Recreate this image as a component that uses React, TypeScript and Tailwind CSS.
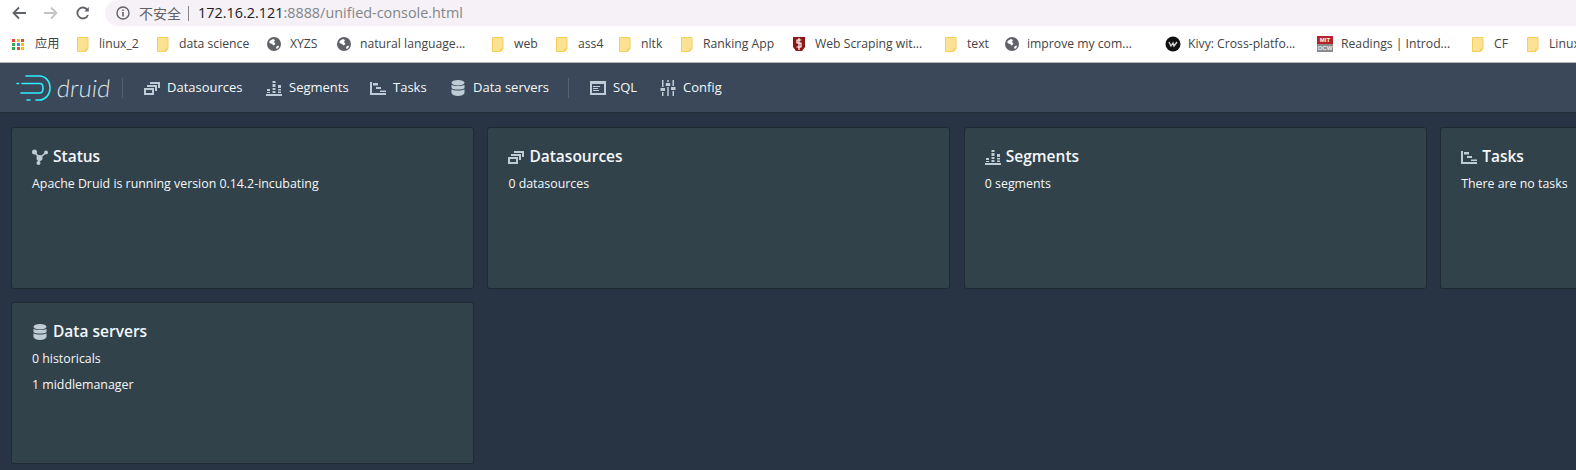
import React from "react";

const ui = "font-['Open_Sans',sans-serif]";

function Folder() {
    return (
        <svg width="12" height="15" viewBox="0 0 12 15" className="shrink-0">
            <path d="M.5.5h10.5v11.5l-2.5 2.5H.5z" fill="#fde293" stroke="#f4cf5a" />
            <path d="M8.5 14.5v-2.5H11" fill="none" stroke="#f4cf5a" />
        </svg>
    );
}

function Globe() {
    return (
        <svg width="14" height="14" viewBox="0 0 14 14" className="shrink-0">
            <circle cx="7" cy="7" r="7" fill="#5f6368" />
            <path d="M2.5 4 6 2l2 1-1 2 1.500 2-2 1.500L5 7 2.500 6zM9.500 9.500l2-1 .5 1.500-2 2-1-1z" fill="#fff" />
        </svg>
    );
}

function AppsGrid() {
    const colors = ["#ea4335", "#fbbc04", "#ea4335", "#34a853", "#4285f4", "#fbbc04", "#34a853", "#ea4335", "#fbbc04"];
    return (
        <div className="grid grid-cols-3 gap-[1px] w-[13px] shrink-0">
            {colors.map((c, i) => (
                <div key={i} className="h-[3px] w-[3px]" style={{ backgroundColor: c }} />
            ))}
        </div>
    );
}

function Stanford() {
    return (
        <svg width="12" height="16" viewBox="0 0 12 16" className="shrink-0">
            <path d="M0 1h12v10l-3 4H3l-3-4z" fill="#8c1515" />
            <path d="M8.500 4H4v3h4v4H3.500M6 2v12" fill="none" stroke="#fff" strokeWidth="1.200" />
        </svg>
    );
}

function Kivy() {
    return (
        <svg width="16" height="16" viewBox="0 0 16 16" className="shrink-0">
            <circle cx="8" cy="8" r="7.500" fill="#111" />
            <path d="M4 6l2 4 2-3 1 3 3-4" fill="none" stroke="#ddd" strokeWidth="1.300" />
        </svg>
    );
}

function Ocw() {
    return (
        <div className="flex h-[16px] w-[16px] shrink-0 flex-col font-['Liberation_Sans',sans-serif] text-[6px] leading-[8px] font-bold">
            <div className="h-[8px] bg-[#b3232e] text-center text-white">MIT</div>
            <div className="h-[8px] bg-[#8c8c8c] text-center text-[#eee]">OCW</div>
        </div>
    );
}

const bookmarks = [
    { label: "应用", icon: <AppsGrid />, w: "w-[65px]", gap: "gap-[10px]" },
    { label: "linux_2", icon: <Folder />, w: "w-[80px]", gap: "gap-[10px]" },
    { label: "data science", icon: <Folder />, w: "w-[110px]", gap: "gap-[10px]" },
    { label: "XYZS", icon: <Globe />, w: "w-[70px]", gap: "gap-[9px]" },
    { label: "natural language...", icon: <Globe />, w: "w-[155px]", gap: "gap-[9px]" },
    { label: "web", icon: <Folder />, w: "w-[64px]", gap: "gap-[10px]" },
    { label: "ass4", icon: <Folder />, w: "w-[63px]", gap: "gap-[10px]" },
    { label: "nltk", icon: <Folder />, w: "w-[62px]", gap: "gap-[10px]" },
    { label: "Ranking App", icon: <Folder />, w: "w-[112px]", gap: "gap-[10px]" },
    { label: "Web Scraping wit...", icon: <Stanford />, w: "w-[152px]", gap: "gap-[10px]" },
    { label: "text", icon: <Folder />, w: "w-[60px]", gap: "gap-[10px]" },
    { label: "improve my com...", icon: <Globe />, w: "w-[160px]", gap: "gap-[8px]" },
    { label: "Kivy: Cross-platfo...", icon: <Kivy />, w: "w-[152px]", gap: "gap-[7px]" },
    { label: "Readings | Introd...", icon: <Ocw />, w: "w-[155px]", gap: "gap-[8px]" },
    { label: "CF", icon: <Folder />, w: "w-[55px]", gap: "gap-[10px]" },
    { label: "Linux", icon: <Folder />, w: "w-[60px]", gap: "gap-[10px]" },
];

/* console icons, 16 unit grid */
function MultiSelect({ className = "" }: { className?: string }) {
    return (
        <svg viewBox="0 0 16 16" className={className} fill="currentColor">
            <path fillRule="evenodd" d="M0 8h10v7H0zm2 2v3h6v-3z" />
            <path d="M3 5h10v6h-2V7H3z" />
            <path d="M6 2h10v6h-2V4H6z" />
        </svg>
    );
}

function StackedChart({ className = "" }: { className?: string }) {
    return (
        <svg viewBox="0 0 16 16" className={className} fill="currentColor">
            <path d="M0 14h16v2H0zM1 9h3v2H1zM1 12h3v1H1zM6.500 1h3v2h-3zM6.500 4h3v3h-3zM6.500 8h3v2h-3zM6.500 11h3v2h-3zM12 5h3v3h-3zM12 9h3v1.500h-3zM12 11.500h3V13h-3z" />
        </svg>
    );
}

function GanttChart({ className = "" }: { className?: string }) {
    return (
        <svg viewBox="0 0 16 16" className={className} fill="currentColor">
            <path d="M0 2h2v11h14v2H0zM3 3h5v2.500H3zM6 7h5v2H6zM10 10.500h6v1.500h-6z" />
        </svg>
    );
}

function Database({ className = "" }: { className?: string }) {
    return (
        <svg viewBox="0 0 16 16" className={className} fill="currentColor">
            <ellipse cx="8" cy="2.800" rx="6.500" ry="2.800" />
            <path d="M1.500 4.800C3 6.500 13 6.500 14.500 4.800V8C13 10 3 10 1.500 8z" />
            <path d="M1.500 9.300C3 11 13 11 14.500 9.300v3.700C14 15 11 16 8 16s-6-1-6.500-3z" />
        </svg>
    );
}

function Application({ className = "" }: { className?: string }) {
    return (
        <svg viewBox="0 0 16 16" className={className} fill="currentColor">
            <path fillRule="evenodd" d="M0 1h16v14H0zm2 3v9h12V4z" />
            <path d="M3 6h7v1H3zM3 8h5v1H3zM3 10h6v1H3z" />
        </svg>
    );
}

function Settings({ className = "" }: { className?: string }) {
    return (
        <svg viewBox="0 0 16 16" className={className} fill="currentColor">
            <path d="M2 0h1.500v7H2zM2 12h1.500v4H2zM.5 8h4.500v3H.5zM7.250 0h1.500v2H7.250zM7.250 7h1.500v9H7.250zM5.750 3h4.500v3h-4.500zM12.500 0h1.500v6h-1.500zM12.500 11h1.500v5h-1.500zM11 7h4.500v3H11z" />
        </svg>
    );
}

function Graph({ className = "" }: { className?: string }) {
    return (
        <svg viewBox="0 0 16 16" className={className} fill="currentColor">
            <circle cx="2.500" cy="3" r="2.500" />
            <circle cx="14" cy="3.500" r="2" />
            <circle cx="7.500" cy="9" r="3" />
            <circle cx="6.500" cy="14" r="2" />
            <path d="M2.500 3l5 6 6.500-5.500M7.500 9l-1 5" fill="none" stroke="currentColor" strokeWidth="1.600" />
        </svg>
    );
}

function DruidLogo() {
    return (
        <svg width="35" height="26" viewBox="0 0 35 26" fill="none" stroke="#2ceefb" strokeWidth="1.600" strokeLinecap="round" className="shrink-0">
            <path d="M10 1h13c6.500 0 11 5 11 12s-5 12-11 12h-3" />
            <path d="M6 8.500h18c2 0 3 2 3 4.500s-1 5-3 5H5" />
            <path d="M1 8.500h1.500M11 25h3" />
        </svg>
    );
}

const navLeft = [
    { label: "Datasources", Icon: MultiSelect, w: "w-[122px]" },
    { label: "Segments", Icon: StackedChart, w: "w-[104px]" },
    { label: "Tasks", Icon: GanttChart, w: "w-[80px]" },
    { label: "Data servers", Icon: Database, w: "w-[118px]" },
];

const navRight = [
    { label: "SQL", Icon: Application, w: "w-[70px]" },
    { label: "Config", Icon: Settings, w: "w-[80px]" },
];

function NavItem({ label, Icon, w }: { label: string; Icon: React.ComponentType<{ className?: string }>; w: string }) {
    return (
        <div className={`flex items-center gap-[7px] ${w}`}>
            <Icon className="h-4 w-4 shrink-0 text-[#bfccd6]" />
            <span className="text-[13px] text-[#f5f8fa]">{label}</span>
        </div>
    );
}

function Card({ title, Icon, lines }: { title: string; Icon: React.ComponentType<{ className?: string }>; lines: string[] }) {
    return (
        <div className="h-[162px] rounded-[3px] border border-[#1f2a33] bg-[#32424b] px-[20px] pt-[18px]">
            <div className="flex h-[22px] items-center gap-[5px]">
                <Icon className="h-4 w-4 shrink-0 text-[#bfccd6]" />
                <h5 className="text-[15.500px] font-semibold text-[#f5f8fa]">{title}</h5>
            </div>
            <div className="mt-[7px] flex flex-col gap-[8px]">
                {lines.map((line) => (
                    <p key={line} className="h-[18px] text-[12.370px] leading-[18px] text-[#f5f8fa]">
                        {line}
                    </p>
                ))}
            </div>
        </div>
    );
}

export default function App() {
    return (
        <main className={`h-[470px] w-[1576px] overflow-hidden bg-[#283444] ${ui}`}>
            {/* Browser toolbar */}
            <div className="flex h-[26px] items-center bg-white">
                <div className="flex w-[105px] items-center pl-[12px]">
                    <svg width="14" height="14" viewBox="0 0 14 14" fill="none" stroke="#5f6368" strokeWidth="1.800">
                        <path d="M14 7H1.500M7 1.500 1.500 7 7 12.500" />
                    </svg>
                    <svg width="14" height="14" viewBox="0 0 14 14" fill="none" stroke="#c4c4c4" strokeWidth="1.800" className="ml-[18px]">
                        <path d="M0 7h12.500M7 1.500 12.500 7 7 12.500" />
                    </svg>
                    <svg width="14" height="14" viewBox="0 0 14 14" fill="none" stroke="#5f6368" strokeWidth="1.800" className="ml-[18px]">
                        <path d="M12 9a5.500 5.500 0 1 1-.5-5" />
                        <path d="M12.800 1v4.500H8.300z" fill="#5f6368" stroke="none" />
                    </svg>
                </div>
                <div className="flex h-[26px] flex-1 items-center rounded-l-full bg-[#f6f1f6] pl-[11px]">
                    <svg width="14" height="14" viewBox="0 0 14 14" className="shrink-0">
                        <circle cx="7" cy="7" r="6" fill="none" stroke="#5f6368" strokeWidth="1.400" />
                        <path d="M6.200 6h1.600v4.500H6.200zM6.200 3.500h1.600v1.500H6.200z" fill="#5f6368" />
                    </svg>
                    <span className="ml-[9px] font-['Noto_Sans_CJK_SC',sans-serif] text-[14px] text-[#5f6368]">不安全</span>
                    <div className="ml-[7px] h-[15px] w-px bg-[#80868b]" />
                    <span className="ml-[9px] text-[14.400px] text-[#202124]">
                        172.16.2.121<span className="text-[#80868b]">:8888/unified-console.html</span>
                    </span>
                </div>
            </div>

            {/* Bookmarks bar */}
            <div className="flex h-[37px] items-center overflow-hidden border-b border-[#b8b8b8] bg-white pt-[1px] pl-[12px] font-['Open_Sans','Noto_Sans_CJK_SC',sans-serif]">
                {bookmarks.map((b) => (
                    <div key={b.label} className={`flex shrink-0 items-center ${b.gap} ${b.w}`}>
                        {b.icon}
                        <span className="text-[12.200px] whitespace-nowrap text-[#444]">{b.label}</span>
                    </div>
                ))}
            </div>

            {/* Druid header */}
            <nav className="flex h-[50px] items-center border-b border-[#222e38] bg-[#3a4859] pl-[16px]">
                <DruidLogo />
                <span className="ml-[6px] inline-block w-[65px] -skew-x-6 font-['Lato',sans-serif] text-[24px] font-light text-[#dde3e8]">druid</span>
                <div className="h-[20px] w-px bg-[#55636f]" />
                <div className="ml-[21px] flex items-center">
                    {navLeft.map((item) => (
                        <NavItem key={item.label} {...item} />
                    ))}
                </div>
                <div className="h-[20px] w-px bg-[#55636f]" />
                <div className="ml-[21px] flex items-center">
                    {navRight.map((item) => (
                        <NavItem key={item.label} {...item} />
                    ))}
                </div>
            </nav>

            {/* Home cards */}
            <div className="grid grid-cols-[repeat(4,463px)] gap-x-[13.400px] gap-y-[13px] pt-[14px] pl-[11px]">
                <Card title="Status" Icon={Graph} lines={["Apache Druid is running version 0.14.2-incubating"]} />
                <Card title="Datasources" Icon={MultiSelect} lines={["0 datasources"]} />
                <Card title="Segments" Icon={StackedChart} lines={["0 segments"]} />
                <Card title="Tasks" Icon={GanttChart} lines={["There are no tasks"]} />
                <Card title="Data servers" Icon={Database} lines={["0 historicals", "1 middlemanager"]} />
            </div>
        </main>
    );
}
